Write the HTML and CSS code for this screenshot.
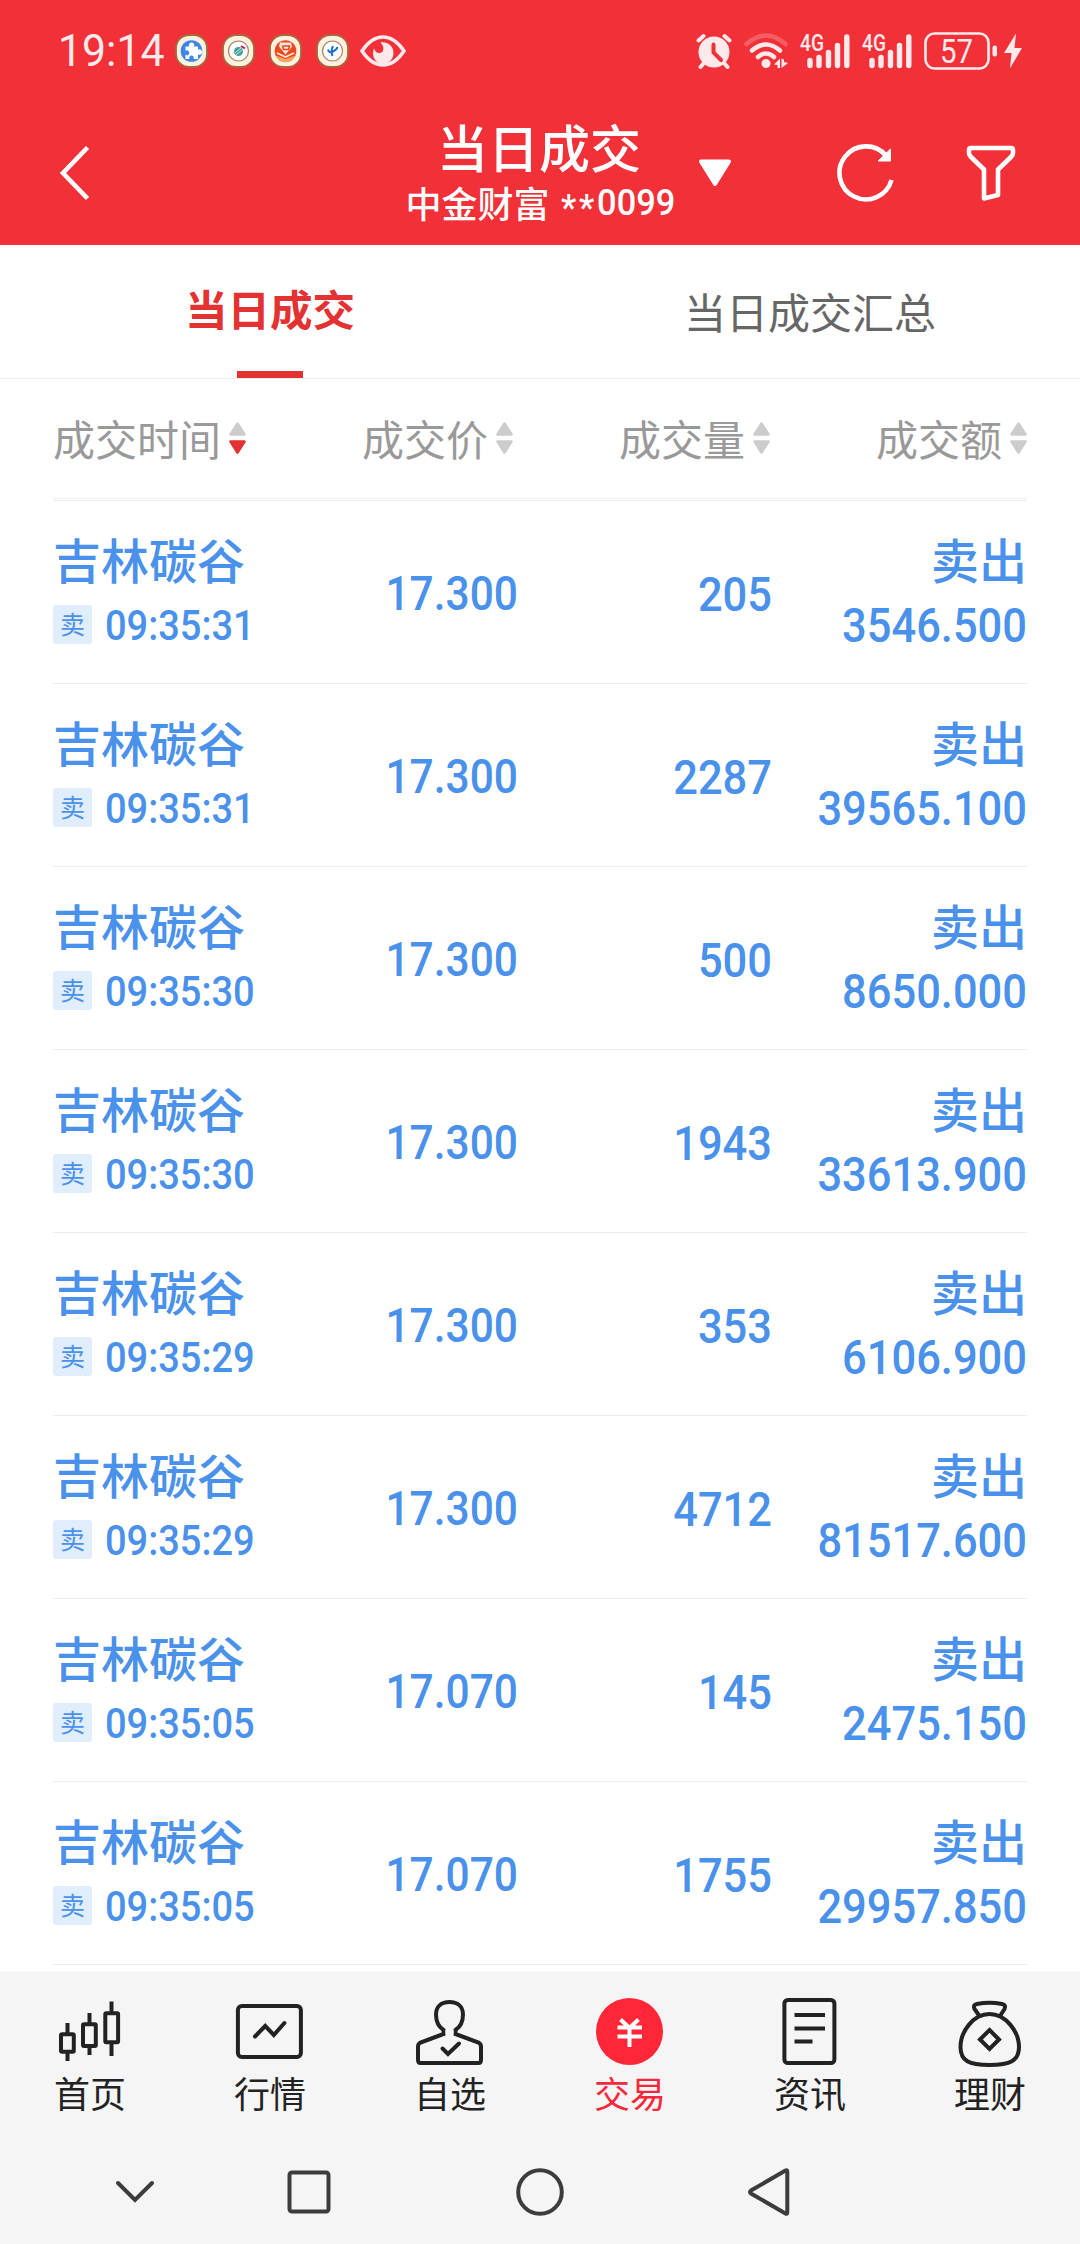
FILE: index.html
```html
<!DOCTYPE html>
<html lang="zh-CN">
<head>
    <meta charset="UTF-8" />
    <meta name="viewport" content="width=device-width, initial-scale=1.0"/>
    <title>当日成交</title>
    <link rel="stylesheet" href="styles.css">
</head>
<body>
    <!-- shared icons -->
    <svg class="sprite" width="0" height="0">
        <symbol id="sort" viewBox="0 0 17 32">
            <path class="sort-up" d="M8.500 1.500 15.500 12.500H1.500Z"/>
            <path class="sort-down" d="M8.500 30.500 15.500 19.500H1.500Z"/>
        </symbol>
        <symbol id="badge" viewBox="0 0 33 34">
            <rect x="1" y="1" width="31" height="32" rx="13" fill="#fdf1e0" stroke="#a8683c" stroke-width="1.800"/>
        </symbol>
    </svg>

    <header class="top">
        <div class="status-bar">
            <span class="clock">19:14</span>
            <div class="notices">
                <svg width="33" height="34" viewBox="0 0 33 34">
                    <use href="#badge"/>
                    <circle cx="16.500" cy="17" r="10.800" fill="#3b86e6"/>
                    <path d="M10.500 12.500h3.700a2.700 2.700 0 1 1 4.800 0H23v3.300a2.700 2.700 0 1 1 0 4.600V25h-4.500a2.300 2.300 0 1 0-4 0h-4v-4.200a2.400 2.400 0 1 0 0-4Z" fill="#fff"/>
                </svg>
                <svg width="33" height="34" viewBox="0 0 33 34">
                    <use href="#badge"/>
                    <circle cx="16.500" cy="17" r="10" fill="#fff" stroke="#a98563" stroke-width="1.200"/>
                    <circle cx="16.500" cy="17.500" r="4.500" fill="#3f9fa0"/>
                    <path d="M13 19l6-5M14 21l6-5" stroke="#cfe9d0" stroke-width="1"/>
                    <path d="M19 12l4 2.500" stroke="#b3225e" stroke-width="2"/>
                </svg>
                <svg width="33" height="34" viewBox="0 0 33 34">
                    <use href="#badge"/>
                    <circle cx="16.500" cy="17" r="10.800" fill="#f4471f"/>
                    <path d="M6.500 21.500 16.500 25l10-3.500a10.800 10.800 0 0 1-20 0Z" fill="#f9a45c"/>
                    <path d="M11 8.500h11l1 4-6.500 8-6.500-8Z" fill="#ffe9de"/>
                    <path d="M13.500 11.500l1 4h5l1-3.500h-6" fill="none" stroke="#e8431c" stroke-width="1.500"/>
                    <path d="M8 19l8.500 4 8.500-4" fill="none" stroke="#ffe9de" stroke-width="1.600"/>
                </svg>
                <svg width="33" height="34" viewBox="0 0 33 34">
                    <use href="#badge"/>
                    <circle cx="16.500" cy="17" r="10" fill="#fff" stroke="#a98563" stroke-width="1.200"/>
                    <path d="M12 15.500q1 4 5 2t4.500-4.500M17 12q-2.500 5-.5 10" fill="none" stroke="#1d6fd1" stroke-width="2"/>
                </svg>
            </div>
            <svg class="eye" width="46" height="32" viewBox="0 0 46 32">
                <path d="M2 16C8 7 15 2 23 2s15 5 21 14C38 25 31 30 23 30S8 25 2 16Z" fill="none" stroke="#ffe9eb" stroke-width="3.500"/>
                <path d="M20.500 7.500c7-1 13 3.500 13 10.500 0 5-3 10-10.500 11-6-.5-10-5-10-11 0-1.500.3-3 1-4.500 1.500 3.500 3.500 5 6 4.500 4.500-1 4.500-7 .500-10.500Z" fill="#ffe9eb"/>
            </svg>
            <div class="indicators">
                <svg width="36" height="36" viewBox="0 0 36 36">
                    <circle cx="18" cy="19" r="15.500" fill="#ffe9eb"/>
                    <path d="M2.500 7.500 7.500 3M33.500 7.500 28.500 3M7.500 30.500 4.500 34M28.500 30.500 31.500 34" stroke="#ffe9eb" stroke-width="4" stroke-linecap="round"/>
                    <path d="M17.500 11.500V19.500L25 27" fill="none" stroke="#f13038" stroke-width="4" stroke-linecap="round"/>
                </svg>
                <svg width="44" height="36" viewBox="0 0 44 36" fill="none" stroke="#ffe9eb" stroke-width="4.500" stroke-linecap="round">
                    <path d="M2.500 11Q22-6 41.500 11" stroke-opacity=".25"/>
                    <path d="M8 17.500Q22 5.500 36 17.500M14 24Q22 17 30 24"/>
                    <circle cx="22" cy="30.500" r="4.500" fill="#ffe9eb" stroke="none"/>
                    <path d="M36 25.500V35H33.500V32L30 31.500ZM37.500 35V25.500L40 26.500V29L44 30Z" fill="#ffe9eb" stroke="none"/>
                </svg>
                <svg width="50" height="36" viewBox="0 0 50 36">
                    <text x="0" y="17.500" textLength="24" lengthAdjust="spacingAndGlyphs" class="signal-text">4G</text>
                    <path class="signal-bars" d="M10 27.500V32.500M19 24.500V32.500M28.500 19.500V32.500M37.500 12.500V32.500M46.800 4V32.500"/>
                </svg>
                <svg width="50" height="36" viewBox="0 0 50 36">
                    <text x="0" y="17.500" textLength="24" lengthAdjust="spacingAndGlyphs" class="signal-text">4G</text>
                    <path class="signal-bars" d="M10 27.500V32.500M19 24.500V32.500M28.500 19.500V32.500M37.500 12.500V32.500M46.800 4V32.500"/>
                </svg>
                <svg width="73" height="38" viewBox="0 0 73 38">
                    <rect x="1.500" y="1.500" width="63" height="35" rx="9" fill="none" stroke="#ffe9eb" stroke-width="2.600"/>
                    <rect x="68.500" y="13.500" width="4.500" height="11" rx="2" fill="#ffe9eb"/>
                    <text x="16" y="30.500" textLength="33" lengthAdjust="spacingAndGlyphs" class="battery-text">57</text>
                </svg>
                <svg class="bolt" width="18" height="36" viewBox="0 0 18 36">
                    <path d="M12 .5 0 20h7.500L6 35.500 18 15h-7.500Z" fill="#ffe9eb"/>
                </svg>
            </div>
        </div>

        <div class="title-bar">
            <svg class="back" width="34" height="60" viewBox="0 0 34 60">
                <path d="M31.500 4.500 7 30 31.500 55.500" fill="none" stroke="#fff" stroke-width="4.600"/>
            </svg>
            <div class="title">
                <h1>当日成交</h1>
                <p>中金财富 <span class="account"><span class="mask">**</span>0099</span></p>
            </div>
            <svg class="dropdown" width="34" height="28" viewBox="0 0 34 28">
                <path d="M3 2.500H31L17 25Z" fill="#fff" stroke="#fff" stroke-width="4" stroke-linejoin="round"/>
            </svg>
            <svg class="refresh" width="60" height="60" viewBox="0 0 60 60">
                <path d="M55.500 37A26.500 26.500 0 1 1 50 12.500" fill="none" stroke="#fff" stroke-width="4.600"/>
                <path d="M54.500 6V18H42Z" fill="#fff" stroke="#fff"/>
            </svg>
            <svg class="filter" width="50" height="56" viewBox="0 0 50 56">
                <path d="M5 3H45Q47 3 47 5V8Q47 10 45 12L32 24.500V50L18 53.500V24.500L5 12Q3 10 3 8V5Q3 3 5 3Z" fill="none" stroke="#fff" stroke-width="4.600" stroke-linejoin="round"/>
            </svg>
        </div>
    </header>

    <nav class="tabs">
        <a class="tab active">当日成交</a>
        <a class="tab">当日成交汇总</a>
    </nav>

    <main>
        <div class="list-head">
            <span class="col desc">成交时间<svg width="17" height="32"><use href="#sort"/></svg></span>
            <span class="col">成交价<svg width="17" height="32"><use href="#sort"/></svg></span>
            <span class="col">成交量<svg width="17" height="32"><use href="#sort"/></svg></span>
            <span class="col">成交额<svg width="17" height="32"><use href="#sort"/></svg></span>
        </div>

        <div class="list">
            <div class="deal">
                <div class="stock"><b>吉林碳谷</b><div class="when"><i>卖</i><span class="time">09:35:31</span></div></div>
                <span class="num price">17.300</span>
                <span class="num">205</span>
                <div class="amount"><b>卖出</b><span class="num">3546.500</span></div>
            </div>
            <div class="deal">
                <div class="stock"><b>吉林碳谷</b><div class="when"><i>卖</i><span class="time">09:35:31</span></div></div>
                <span class="num price">17.300</span>
                <span class="num">2287</span>
                <div class="amount"><b>卖出</b><span class="num">39565.100</span></div>
            </div>
            <div class="deal">
                <div class="stock"><b>吉林碳谷</b><div class="when"><i>卖</i><span class="time">09:35:30</span></div></div>
                <span class="num price">17.300</span>
                <span class="num">500</span>
                <div class="amount"><b>卖出</b><span class="num">8650.000</span></div>
            </div>
            <div class="deal">
                <div class="stock"><b>吉林碳谷</b><div class="when"><i>卖</i><span class="time">09:35:30</span></div></div>
                <span class="num price">17.300</span>
                <span class="num">1943</span>
                <div class="amount"><b>卖出</b><span class="num">33613.900</span></div>
            </div>
            <div class="deal">
                <div class="stock"><b>吉林碳谷</b><div class="when"><i>卖</i><span class="time">09:35:29</span></div></div>
                <span class="num price">17.300</span>
                <span class="num">353</span>
                <div class="amount"><b>卖出</b><span class="num">6106.900</span></div>
            </div>
            <div class="deal">
                <div class="stock"><b>吉林碳谷</b><div class="when"><i>卖</i><span class="time">09:35:29</span></div></div>
                <span class="num price">17.300</span>
                <span class="num">4712</span>
                <div class="amount"><b>卖出</b><span class="num">81517.600</span></div>
            </div>
            <div class="deal">
                <div class="stock"><b>吉林碳谷</b><div class="when"><i>卖</i><span class="time">09:35:05</span></div></div>
                <span class="num price">17.070</span>
                <span class="num">145</span>
                <div class="amount"><b>卖出</b><span class="num">2475.150</span></div>
            </div>
            <div class="deal">
                <div class="stock"><b>吉林碳谷</b><div class="when"><i>卖</i><span class="time">09:35:05</span></div></div>
                <span class="num price">17.070</span>
                <span class="num">1755</span>
                <div class="amount"><b>卖出</b><span class="num">29957.850</span></div>
            </div>
        </div>
    </main>

    <footer class="bottom">
        <nav class="menu">
            <a class="menu-item">
                <svg viewBox="0 0 72 72">
                    <rect x="7" y="38.300" width="12.800" height="17.500" rx="1"/>
                    <rect x="29" y="28.300" width="12.800" height="21.700" rx="1"/>
                    <rect x="51.300" y="17.300" width="12.800" height="29" rx="1"/>
                    <path d="M13.500 27v10M13.500 57v8M35.500 17v10M35.500 51v8M57.500 5.500V16M57.500 48v12"/>
                </svg>
                首页
            </a>
            <a class="menu-item">
                <svg viewBox="0 0 72 72">
                    <rect x="3.900" y="10" width="63" height="51" rx="4"/>
                    <path d="M21 40.500 31.200 30 39.800 39 50.400 27" stroke-linecap="round"/>
                </svg>
                行情
            </a>
            <a class="menu-item">
                <svg viewBox="0 0 72 72">
                    <path d="M29.500 34Q22 29 22 18.500C22 10.500 27.500 6 35.500 6S49 10.500 49 18.500Q49 29 41.500 34V38L64.500 46.500Q67 48 67 50.500V63.500Q67 67 64.500 67H6.500Q4 67 4 63.500V50.500Q4 48 6.500 46.500L29.500 38Z"/>
                    <path class="gap" d="M31.500 36H39.500"/>
                    <path d="M28.500 52.500 34 58 45 47.500" stroke-linecap="round"/>
                </svg>
                自选
            </a>
            <a class="menu-item active">
                <svg viewBox="0 0 72 72">
                    <circle class="coin" cx="35.500" cy="35.500" r="33.500"/>
                    <path class="yen" d="M26.500 23.500 35.500 32 44.500 23.500M35.500 32V51M23.500 31.500H48M23.500 40.500H48"/>
                </svg>
                交易
            </a>
            <a class="menu-item">
                <svg viewBox="0 0 72 72">
                    <rect x="10.400" y="4" width="50" height="63" rx="3.500"/>
                    <path d="M20.500 19H51M20.500 32.500H51M20.500 45.500H38.500"/>
                </svg>
                资讯
            </a>
            <a class="menu-item">
                <svg viewBox="0 0 72 72">
                    <path d="M25.500 20 20.500 13Q18.500 9 23 8Q35.500 5.500 48 8Q52.500 9 50.500 13L46 20"/>
                    <path d="M35.500 18C19 18 6.500 36 6.500 51C6.500 65 15 69 35.500 69S65 65 65 51C65 36 52 18 35.500 18Z"/>
                    <path d="M35.500 34 45 43.500 35.500 53 26 43.500Z"/>
                </svg>
                理财
            </a>
        </nav>
        <div class="sys-nav">
            <svg viewBox="0 0 48 48"><path d="M7 15 24 32 41 15" stroke-linecap="round"/></svg>
            <svg viewBox="0 0 48 48"><rect x="4.500" y="4.500" width="39" height="39" rx="2.500"/></svg>
            <svg viewBox="0 0 48 48"><circle cx="24" cy="24" r="21.800"/></svg>
            <svg viewBox="0 0 48 48"><path d="M40.500 2.500Q42.300 1.500 42.300 4V44Q42.300 46.500 40.500 45.500L6 25.500Q4 24 6 22.500Z"/></svg>
        </div>
    </footer>
</body>
</html>
```
FILE: styles.css
```css
:root {
    --primary-color: #f13038;
    --tab-color: #e43131;
    --sell-color: #4a91eb;
    --sell-bg: #e0edfd;
    --line-color: #ededed;
    --bar-bg: #f5f5f5;
    --status-color: #ffe9eb;
}
* { box-sizing: border-box; }
body {
    margin: 0;
    width: 1080px;
    height: 2244px;
    overflow: hidden;
    display: flex;
    flex-direction: column;
    background-color: #fff;
    font-family: "Noto Sans CJK SC", sans-serif;
}
svg { display: block; flex: none; }
.sprite { position: absolute; }

/* header */
.top {
    height: 245px;
    background-color: var(--primary-color);
    color: white;
}
.status-bar {
    display: flex;
    align-items: center;
    height: 101px;
    padding: 0 58px;
}
.clock {
    width: 117px;
    font: 400 45px/60px Roboto, sans-serif;
    color: var(--status-color);
    transform: scaleX(.95);
    transform-origin: left;
}
.notices { display: flex; gap: 14px; }
.eye { margin-left: 11px; }
.indicators {
    display: flex;
    align-items: center;
    gap: 12px;
    margin-left: auto;
}
.bolt { margin-left: -5px; }
.signal-text { font: 500 23px Roboto, sans-serif; fill: var(--status-color); }
.signal-bars {
    fill: none;
    stroke: var(--status-color);
    stroke-width: 5.4;
    stroke-linecap: round;
}
.battery-text { font: 400 33px Roboto, sans-serif; fill: var(--status-color); }

.title-bar {
    display: flex;
    align-items: center;
    height: 144px;
    padding-left: 56px;
}
.title {
    width: 268px;
    margin-left: 315px;
    text-align: center;
    white-space: nowrap;
}
.title h1 {
    margin: 0 0 2px;
    font-size: 51px;
    line-height: 56px;
    font-weight: 500;
}
.title p {
    display: flex;
    justify-content: center;
    gap: 11px;
    margin: 0;
    font-size: 36px;
    line-height: 52px;
    font-weight: 500;
}
.account {
    width: 112px;
    text-align: left;
    font: 500 37px/53px Roboto, sans-serif;
    transform: scaleX(.93);
    transform-origin: left;
}
.mask { letter-spacing: 3px; vertical-align: -5px; line-height: 1; }
.dropdown { margin-left: 25px; }
.refresh { margin-left: 104px; }
.filter { margin-left: 70px; }

/* tabs */
.tabs {
    display: flex;
    height: 134px;
    border-bottom: 1px solid var(--line-color);
}
.tab {
    position: relative;
    flex: 1;
    text-align: center;
    font-size: 42px;
    line-height: 132px;
    color: #666;
}
.tab.active {
    font-size: 42.5px;
    line-height: 126px;
    font-weight: 600;
    color: var(--tab-color);
}
.tab.active::after {
    content: "";
    position: absolute;
    left: 50%;
    bottom: 0;
    width: 66px;
    height: 7px;
    margin-left: -33px;
    background-color: var(--tab-color);
}

/* deals */
main {
    flex: 1;
    padding: 0 53px;
}
.list-head {
    display: grid;
    grid-template-columns: 260px 200px 257px 257px;
    height: 120px;
    margin-bottom: 1px;
    border-bottom: 1px solid var(--line-color);
    font-size: 42px;
    line-height: 116px;
    color: #999;
}
.col {
    display: flex;
    align-items: center;
    justify-content: flex-end;
    gap: 8px;
    height: 117px;
}
.col:first-child { justify-content: flex-start; }
.sort-up, .sort-down {
    fill: #ccc;
    stroke: #ccc;
    stroke-width: 2.6;
    stroke-linejoin: round;
}
.desc { --down: var(--tab-color); }
.sort-down { fill: var(--down, #ccc); stroke: var(--down, #ccc); }
.list { border-top: 1px solid var(--line-color); }
.deal {
    display: grid;
    grid-template-columns: 260px 205px 254px 255px;
    height: 183px;
    padding-top: 27px;
    border-bottom: 1px solid var(--line-color);
    color: var(--sell-color);
}
.deal b {
    display: block;
    height: 66px;
    font-size: 48px;
    line-height: 60px;
    font-weight: 500;
}
.when { display: flex; align-items: center; height: 60px; }
.when i {
    width: 39px;
    height: 39px;
    border-radius: 3px;
    background-color: var(--sell-bg);
    text-align: center;
    font-size: 25px;
    line-height: 36px;
    font-style: normal;
}
.time {
    margin-left: 13px;
    font: 500 42px/60px Roboto, sans-serif;
    padding-top: 3px;
    transform: scaleX(.905);
    transform-origin: left;
}
.num {
    font: 500 48px/60px Roboto, sans-serif;
    text-align: right;
    transform: scaleX(.905);
    transform-origin: right;
}
.deal > .num { line-height: 134px; }
.deal > .price { line-height: 132px; transform: scaleX(.885); }
.amount { text-align: right; }
.amount .num { display: block; padding-top: 2px; }

/* bottom bars */
.bottom {
    height: 273px;
    background-color: var(--bar-bg);
}
.menu { display: flex; height: 169px; padding-top: 25px; }
.menu-item {
    flex: 1;
    display: flex;
    flex-direction: column;
    align-items: center;
    font-size: 36px;
    line-height: 49px;
    color: #222;
}
.menu-item svg {
    width: 72px;
    height: 72px;
    fill: none;
    stroke: #222;
    stroke-width: 4;
}
.menu-item .gap { stroke: var(--bar-bg); }
.menu-item.active { color: #f5283a; }
.menu-item .coin { fill: #ff2637; stroke: none; }
.menu-item .yen { stroke: white; }
.sys-nav {
    display: grid;
    grid-template-columns: 174px 231px 229px 1fr;
    padding: 28px 0 0 111px;
}
.sys-nav svg {
    width: 48px;
    height: 48px;
    fill: none;
    stroke: #3c3c3c;
    stroke-width: 4;
}
```
